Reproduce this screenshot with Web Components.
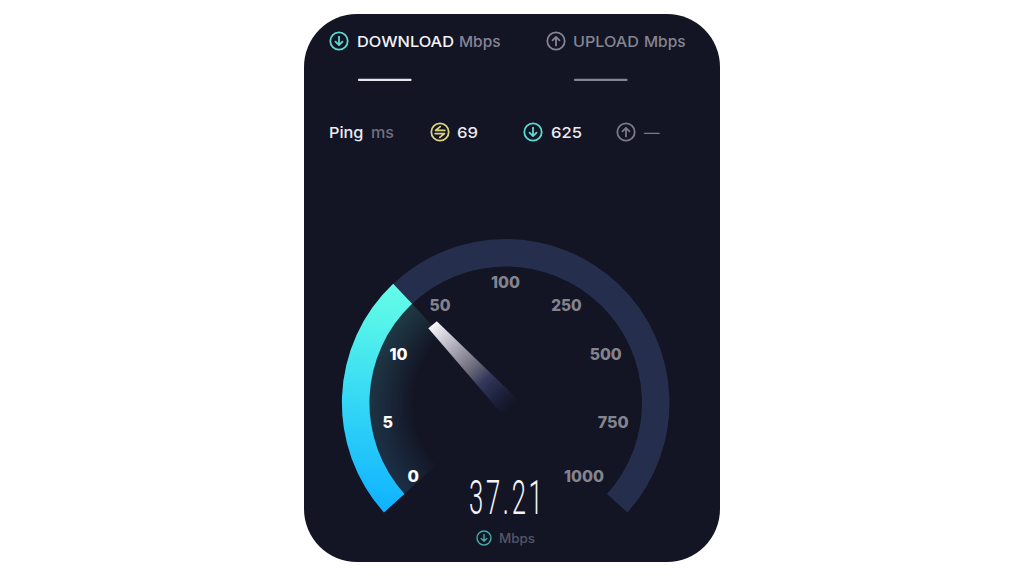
<!DOCTYPE html>
<html lang="en">
<head>
<meta charset="utf-8">
<title>Speed test</title>
<style>
  body {
    margin: 0;
    min-height: 100vh;
    display: flex;
    align-items: center;
    justify-content: center;
    background: #ffffff;
    font-family: Inter, 'Open Sans', sans-serif;
  }
</style>
</head>
<body>
<speed-panel>
  <speed-head slot="head" icon="down" color="#5fd9cf" title-text="DOWNLOAD" title-width="97" title-color="#f4f4f8" line="#e6e6ec"></speed-head>
  <speed-head slot="head" icon="up" color="#858592" title-text="UPLOAD" title-width="66" title-color="#858592" line="#858592"></speed-head>
  <ping-row slot="ping"></ping-row>
  <speed-gauge slot="gauge" value="37.21"></speed-gauge>
</speed-panel>

<script>
// Scale a text sideways so that it fills w
function fit(text, w) {
  const natural = text.getComputedTextLength();
  if (natural) {
    text.setAttribute('transform', `translate(${text.dataset.x || 0} 0) scale(${w / natural} 1)`);
  }
}

class FitText extends HTMLElement {
  connectedCallback() {
    const w = this.getAttribute('w');
    const size = this.getAttribute('size') || 15;
    const weight = this.getAttribute('weight') || 450;
    const h = this.getAttribute('h') || 20;
    const base = this.getAttribute('base') || 15.5;
    const root = this.attachShadow({ mode: 'open' });
    root.innerHTML = `
      <style>
        :host { display: block; flex: none; width: ${w}px; height: ${h}px; }
        svg { display: block; overflow: visible; }
        text { fill: currentColor; }
      </style>
      <svg width="${w}" height="${h}">
        <text y="${base}" font-size="${size}" font-weight="${weight}">${this.getAttribute('text')}</text>
      </svg>`;
    fit(root.querySelector('text'), w);
  }
}
customElements.define('fit-text', FitText);

const glyphs = {
  down: '<path d="M10 5.6V14M6.5 10.7L10 14.1L13.5 10.7"/>',
  up: '<path d="M10 14.4V6M6.5 9.3L10 5.9L13.5 9.3"/>',
  ping: '<path d="M14.8 8.4H5.6L10.2 4.6M5.2 11.6H14.4L9.8 15.4"/>'
};

class RoundIcon extends HTMLElement {
  connectedCallback() {
    const size = this.getAttribute('size') || 20;
    this.attachShadow({ mode: 'open' }).innerHTML = `
      <style>
        :host { display: block; flex: none; width: ${size}px; height: ${size}px; }
        svg { display: block; fill: none; stroke: currentColor; stroke-width: 1.8; stroke-linecap: round; stroke-linejoin: round; }
      </style>
      <svg width="${size}" height="${size}" viewBox="0 0 20 20">
        <circle cx="10" cy="10" r="8.7"/>
        ${glyphs[this.getAttribute('name')]}
      </svg>`;
  }
}
customElements.define('round-icon', RoundIcon);

class SpeedHead extends HTMLElement {
  connectedCallback() {
    const a = name => this.getAttribute(name);
    this.attachShadow({ mode: 'open' }).innerHTML = `
      <style>
        :host { display: block; flex: none; width: 216.3px; }
        .title { display: flex; height: 20px; color: #858592; }
        round-icon { color: ${a('color')}; margin-right: 7.5px; }
        .name { color: ${a('title-color')}; margin-right: 5px; }
        .line { display: block; margin: 27px 0 0 28.5px; }
      </style>
      <div class="title">
        <round-icon name="${a('icon')}"></round-icon>
        <fit-text class="name" base="16.2" w="${a('title-width')}" text="${a('title-text')}"></fit-text>
        <fit-text w="41.5" base="16.2" text="Mbps"></fit-text>
      </div>
      <svg class="line" width="54" height="4"><rect y=".7" width="53.5" height="2.4" rx=".8" fill="${a('line')}"/></svg>`;
  }
}
customElements.define('speed-head', SpeedHead);

class PingRow extends HTMLElement {
  connectedCallback() {
    this.attachShadow({ mode: 'open' }).innerHTML = `
      <style>
        :host { display: flex; height: 20px; color: #ececf2; }
        .cell { display: flex; gap: 7.5px; }
        .label { width: 100.7px; }
        .idle { width: 93.5px; }
        .down { width: 93.2px; }
        .muted { color: #70707f; }
        .dash { color: #7a7a87; }
      </style>
      <div class="cell label">
        <fit-text w="34.5" base="15.8" text="Ping"></fit-text>
        <fit-text class="muted" w="23" base="15.8" text="ms"></fit-text>
      </div>
      <div class="cell idle">
        <round-icon name="ping" style="color:#ddd37e"></round-icon>
        <fit-text w="21" base="15.8" text="69"></fit-text>
      </div>
      <div class="cell down">
        <round-icon name="down" style="color:#5fd9cf"></round-icon>
        <fit-text w="31" base="15.8" text="625"></fit-text>
      </div>
      <div class="cell dash">
        <round-icon name="up"></round-icon>
        <fit-text w="15.5" weight="400" base="16" text="—"></fit-text>
      </div>`;
  }
}
customElements.define('ping-row', PingRow);

// Scale labels: text, centre x, baseline, width, reached
const marks = [
  ['0', 413.3, 482.3, 11.5, true],
  ['5', 387.8, 428.3, 10.5, true],
  ['10', 398.5, 359.7, 18, true],
  ['50', 440, 310.9, 21, false],
  ['100', 505.5, 288, 29, false],
  ['250', 566.5, 310.9, 30.5, false],
  ['500', 605.7, 359.7, 32, false],
  ['750', 613.3, 428.3, 31, false],
  ['1000', 584, 482.3, 40, false]
];

const CX = 505.7, CY = 402.8, R_OUT = 163.8, R_IN = 136.3;
const START = 138, END = 402, NOW = 226.6;

function polar(r, deg) {
  const t = deg * Math.PI / 180;
  return `${(CX + r * Math.cos(t)).toFixed(2)} ${(CY + r * Math.sin(t)).toFixed(2)}`;
}

function band(rOut, rIn, from, to) {
  const big = to - from > 180 ? 1 : 0;
  return `M${polar(rOut, from)}A${rOut} ${rOut} 0 ${big} 1 ${polar(rOut, to)}` +
    `L${polar(rIn, to)}A${rIn} ${rIn} 0 ${big} 0 ${polar(rIn, from)}Z`;
}

class SpeedGauge extends HTMLElement {
  connectedCallback() {
    const labels = marks.map(([text, x, y, w, on]) => `
      <text data-x="${x - w / 2}" data-w="${w}" y="${y}" fill="${on ? '#ffffff' : '#84848f'}">${text}</text>`).join('');
    const root = this.attachShadow({ mode: 'open' });
    root.innerHTML = `
      <style>
        :host { display: grid; width: 416px; height: 342px; }
        .dial, .readout { grid-area: 1 / 1; }
        .dial { display: block; font-size: 16px; font-weight: 800; }
        .readout { align-self: end; display: flex; flex-direction: column; align-items: center; padding: 0 13px 16px 0; }
        .value { color: #f3f3f8; font-family: Roboto, sans-serif; letter-spacing: 5px; margin-left: 4px; }
        .unit { display: flex; gap: 6.5px; height: 16px; margin-top: 14px; color: #565664; }
        .unit round-icon { color: #46a7a3; }
      </style>
      <svg class="dial" width="416" height="342" viewBox="304 220 416 342">
        <defs>
          <linearGradient id="fill" gradientUnits="userSpaceOnUse" x1="410" y1="290" x2="378" y2="510">
            <stop offset="0" stop-color="#63fbe9"/>
            <stop offset=".15" stop-color="#57f4ea"/>
            <stop offset=".55" stop-color="#33d6f5"/>
            <stop offset="1" stop-color="#0fb2ff"/>
          </linearGradient>
          <linearGradient id="glowHue" gradientUnits="userSpaceOnUse" x1="0" y1="300" x2="0" y2="495">
            <stop offset="0" stop-color="#4fc8c0"/>
            <stop offset="1" stop-color="#3f90c4"/>
          </linearGradient>
          <radialGradient id="fade" gradientUnits="userSpaceOnUse" cx="${CX}" cy="${CY}" r="${R_IN}">
            <stop offset=".66" stop-color="#fff" stop-opacity="0"/>
            <stop offset=".78" stop-color="#fff" stop-opacity=".08"/>
            <stop offset=".9" stop-color="#fff" stop-opacity=".16"/>
            <stop offset="1" stop-color="#fff" stop-opacity=".21"/>
          </radialGradient>
          <mask id="glowMask" maskUnits="userSpaceOnUse" x="304" y="220" width="416" height="342">
            <circle cx="${CX}" cy="${CY}" r="${R_IN + 1}" fill="url(#fade)"/>
          </mask>
          <linearGradient id="needle" gradientUnits="userSpaceOnUse" x1="433" y1="325" x2="511" y2="409">
            <stop offset="0" stop-color="#f7f5fa"/>
            <stop offset=".22" stop-color="#bbb9c5"/>
            <stop offset=".5" stop-color="#6d6c7c"/>
            <stop offset=".66" stop-color="#34385a"/>
            <stop offset=".82" stop-color="#212846" stop-opacity=".85"/>
            <stop offset="1" stop-color="#1b2140" stop-opacity="0"/>
          </linearGradient>
        </defs>
        <path d="${band(R_OUT, R_IN, START, END)}" fill="#252f4d"/>
        <path d="${band(R_IN + 0.5, 80, START, NOW)}" fill="url(#glowHue)" mask="url(#glowMask)"/>
        <path d="${band(R_OUT, R_IN, START, NOW)}" fill="url(#fill)"/>
        <path d="M428.3 328.3L436.8 321.3L520 401.5L505 417.5Z" fill="url(#needle)"/>
        ${labels}
      </svg>
      <div class="readout">
        <fit-text class="value" w="76.5" h="36" base="34.3" size="48" weight="300" text="${this.getAttribute('value')}"></fit-text>
        <div class="unit">
          <round-icon name="down" size="16"></round-icon>
          <fit-text w="36" size="12.5" h="16" base="12.6" text="Mbps"></fit-text>
        </div>
      </div>`;
    root.querySelectorAll('.dial text').forEach(t => fit(t, t.dataset.w));
  }
}
customElements.define('speed-gauge', SpeedGauge);

class SpeedPanel extends HTMLElement {
  connectedCallback() {
    this.attachShadow({ mode: 'open' }).innerHTML = `
      <style>
        :host {
          display: flex;
          flex-direction: column;
          width: 416px;
          height: 548px;
          border-radius: 53px;
          background: #131424;
          overflow: hidden;
        }
        .heads { display: flex; padding: 16.5px 0 0 25.4px; height: 91px; box-sizing: border-box; }
        .ping { padding: 16.5px 0 0 25px; flex: 1; }
      </style>
      <div class="heads"><slot name="head"></slot></div>
      <div class="ping"><slot name="ping"></slot></div>
      <slot name="gauge"></slot>`;
  }
}
customElements.define('speed-panel', SpeedPanel);
</script>
</body>
</html>
